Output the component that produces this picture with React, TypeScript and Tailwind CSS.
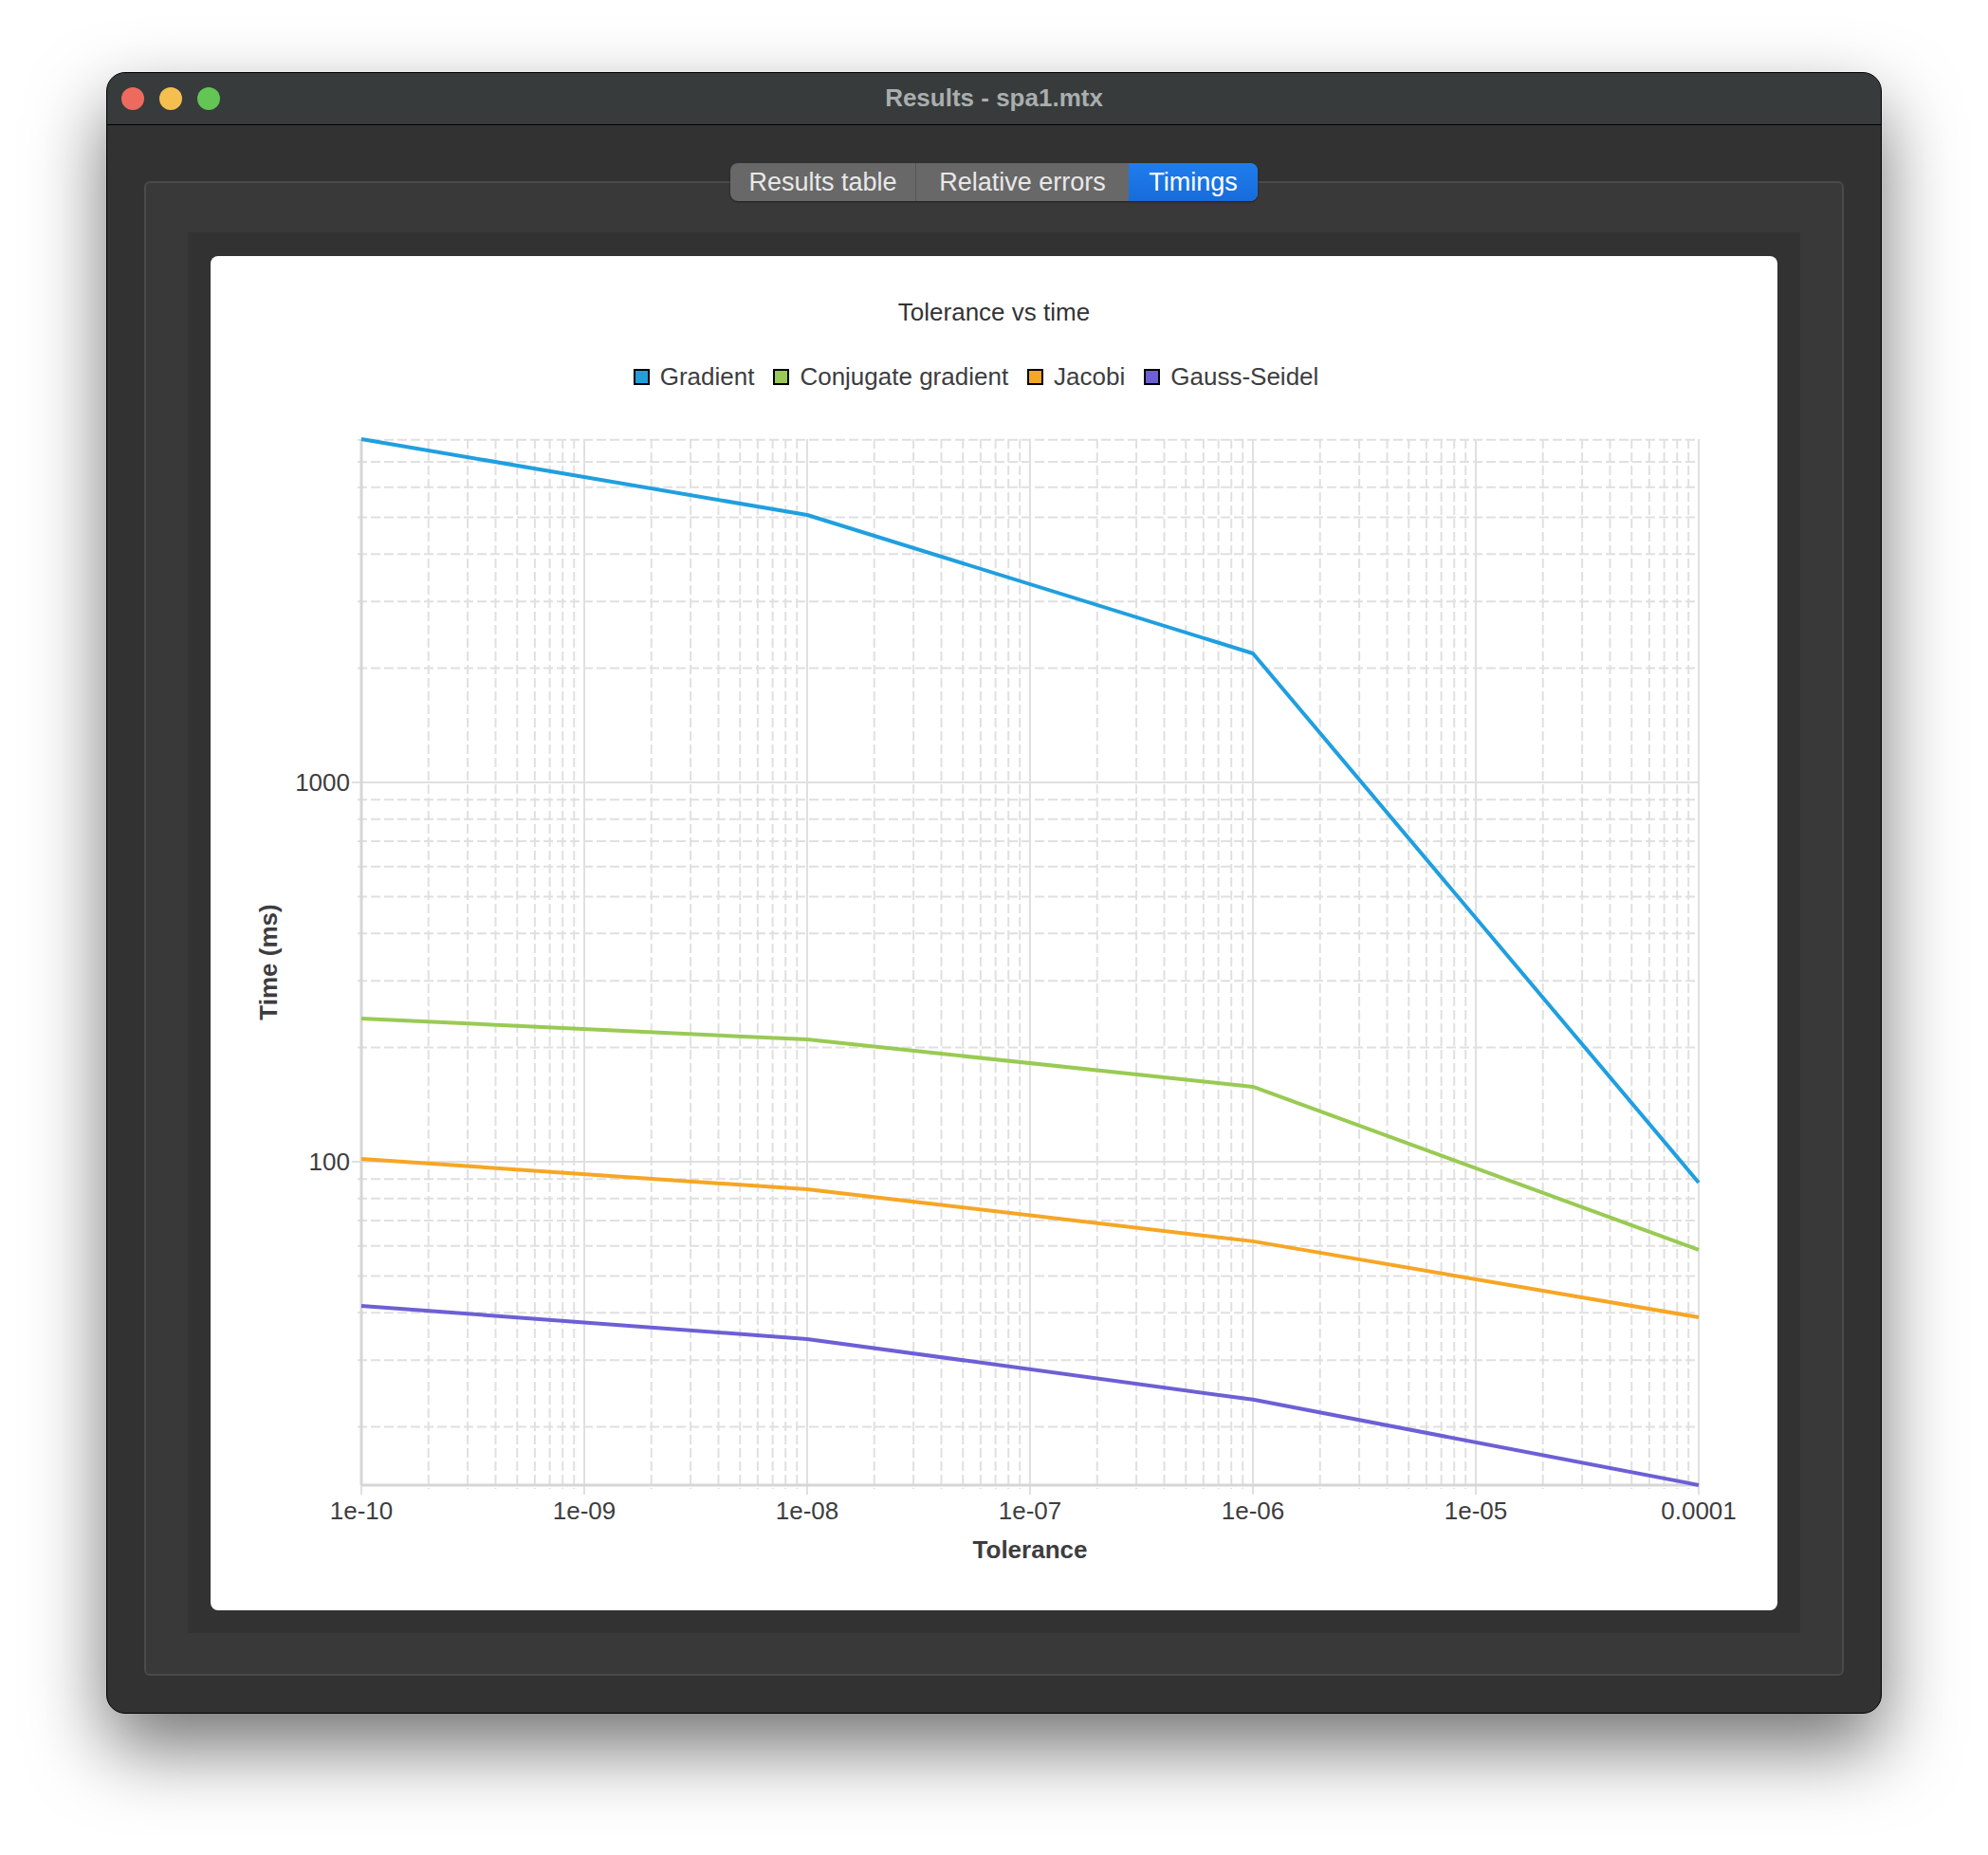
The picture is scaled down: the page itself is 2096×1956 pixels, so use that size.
import React from 'react';

const FONT = '"Liberation Sans", Arial, Helvetica, sans-serif';

// plot geometry, in svg units (svg origin = card left, 150px below card top)
const X0 = 159;
const X1 = 1569;
const Y0 = 43;
const Y1 = 1146;
const DECADE_X = 235;
const DECADE_Y = 400;
const Y_1000 = 405;

const xOf = (exp: number) => X0 + DECADE_X * (exp + 10);
const yOf = (v: number) => Y_1000 - DECADE_Y * (Math.log10(v) - 3);

const series = [
  { name: 'Gradient', color: '#209fdf', values: [8035, 5070, 2188, 88.1] },
  { name: 'Conjugate gradient', color: '#99ca53', values: [238.5, 210, 157.6, 58.6] },
  { name: 'Jacobi', color: '#f6a625', values: [101.7, 84.6, 61.7, 38.9] },
  { name: 'Gauss-Seidel', color: '#6d5fd5', values: [41.7, 34.1, 23.6, 14.05] },
];
const tolExps = [-10, -8, -6, -4];
const xLabels = ['1e-10', '1e-09', '1e-08', '1e-07', '1e-06', '1e-05', '0.0001'];

function TrafficLights() {
  return (
    <div className="flex items-center gap-[16px] pl-[15px]">
      <div className="w-[24px] h-[24px] rounded-full bg-[#ee6a5f]" />
      <div className="w-[24px] h-[24px] rounded-full bg-[#f5bf4f]" />
      <div className="w-[24px] h-[24px] rounded-full bg-[#62c554]" />
    </div>
  );
}

function Tabs() {
  return (
    <div className="flex justify-center -mt-[21px] h-[40px] relative z-10">
      <div className="flex rounded-[8px] overflow-hidden bg-[#686868] shadow-[0_1px_2px_rgba(0,0,0,0.45)] text-[27px] leading-[40px]">
        <div className="w-[196px] text-center text-[#e8e8e8] border-r border-[#565656]">Results table</div>
        <div className="w-[224px] text-center text-[#e8e8e8]">Relative errors</div>
        <div className="w-[136px] text-center text-white bg-gradient-to-b from-[#1f7ded] to-[#176cda]">Timings</div>
      </div>
    </div>
  );
}

function Legend() {
  return (
    <div className="flex items-center gap-[20px] mt-[38px] mr-[38px] h-[30px] text-[26px] text-[#3d3d40]">
      {series.map((s) => (
        <div key={s.name} className="flex items-center gap-[11px]">
          <div className="w-[17px] h-[17px] border-2 border-black" style={{ backgroundColor: s.color }} />
          <span>{s.name}</span>
        </div>
      ))}
    </div>
  );
}

function Plot() {
  const minorY: number[] = [];
  for (const k of [10, 100, 1000]) {
    for (let m = 2; m <= 9; m++) {
      const y = yOf(m * k);
      if (y >= Y0 - 1 && y <= Y1) minorY.push(y);
    }
  }
  const minorX: number[] = [];
  for (let d = -10; d < -4; d++) {
    for (let m = 2; m <= 9; m++) minorX.push(xOf(d + Math.log10(m)));
  }

  return (
    <svg width={1652} height={1277} className="block" style={{ fontFamily: FONT }}>
      {/* minor grid */}
      {minorY.map((y, i) => (
        <line key={'my' + i} x1={X0 - 4} x2={X1} y1={y} y2={y} stroke="#e0e0e0" strokeWidth={2} strokeDasharray="10 4" />
      ))}
      {minorX.map((x, i) => (
        <line key={'mx' + i} x1={x} x2={x} y1={Y0} y2={Y1 + 4} stroke="#e0e0e0" strokeWidth={2} strokeDasharray="10 4" />
      ))}
      {/* major grid */}
      {[100, 1000].map((v) => (
        <line key={'gy' + v} x1={X0 - 10} x2={X1} y1={yOf(v)} y2={yOf(v)} stroke="#e0e0e0" strokeWidth={2} />
      ))}
      {xLabels.map((_, i) => (
        <line key={'gx' + i} x1={xOf(i - 10)} x2={xOf(i - 10)} y1={Y0} y2={Y1 + 10} stroke="#e0e0e0" strokeWidth={2} />
      ))}
      {/* axes */}
      <line x1={X0} x2={X0} y1={Y0} y2={Y1} stroke="#d6d6d6" strokeWidth={3} />
      <line x1={X0} x2={X1} y1={Y1} y2={Y1} stroke="#d6d6d6" strokeWidth={3} />

      {/* series */}
      {series.map((s) => (
        <polyline
          key={s.name}
          fill="none"
          stroke={s.color}
          strokeWidth={4}
          strokeLinejoin="round"
          points={s.values.map((v, i) => `${xOf(tolExps[i])},${yOf(v)}`).join(' ')}
        />
      ))}

      {/* labels */}
      <g fill="#3d3d40" fontSize={26}>
        <text x={147} y={yOf(1000) + 9} textAnchor="end">1000</text>
        <text x={147} y={yOf(100) + 9} textAnchor="end">100</text>
        {xLabels.map((l, i) => (
          <text key={l} x={xOf(i - 10)} y={1182} textAnchor="middle">{l}</text>
        ))}
        <text x={(X0 + X1) / 2} y={1223} textAnchor="middle" fontWeight="bold">Tolerance</text>
        <text
          x={0}
          y={0}
          textAnchor="middle"
          fontWeight="bold"
          transform={`translate(70 ${(Y0 + Y1) / 2}) rotate(-90)`}
        >
          Time (ms)
        </text>
      </g>
    </svg>
  );
}

export default function App() {
  return (
    <div className="w-[2096px] h-[1956px] bg-white pt-[76px] pl-[112px]" style={{ fontFamily: FONT }}>
      <div className="w-[1872px] h-[1731px] rounded-[20px] border border-black bg-[#323232] shadow-[0_36px_80px_rgba(0,0,0,0.55)] overflow-hidden flex flex-col">
        {/* title bar */}
        <div className="h-[55px] shrink-0 bg-[#373b3b] border-b border-black grid grid-cols-[1fr_auto_1fr] items-center">
          <TrafficLights />
          <div className="text-[26px] font-bold text-[#a9aeae] -mt-[2px]">Results - spa1.mtx</div>
          <div />
        </div>

        {/* body */}
        <div className="flex-1 flex flex-col pt-[59px] px-[39px] pb-[39px]">
          <div className="flex-1 flex flex-col border-2 border-[#4a4a4a] bg-[#393939] rounded-[6px]">
            <Tabs />
            <div className="flex-1 flex flex-col mt-[33px] mx-[44px] mb-[43px] bg-[#323232] pt-[25px] px-[24px] pb-[24px]">
              <div className="flex-1 flex flex-col items-center bg-white rounded-[8px] overflow-hidden">
                <div className="mt-[44px] h-[30px] leading-[30px] text-[26px] text-[#333335]">Tolerance vs time</div>
                <Legend />
                <div className="self-stretch mt-[8px]">
                  <Plot />
                </div>
              </div>
            </div>
          </div>
        </div>
      </div>
    </div>
  );
}
